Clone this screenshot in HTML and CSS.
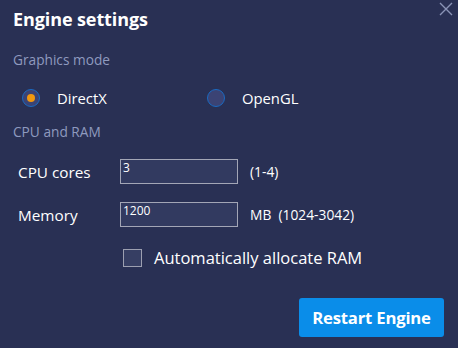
FILE: index.html
```html
<!DOCTYPE html>
<html>
<head>
<meta charset="utf-8">
<link rel="stylesheet" href="styles.css">
</head>
<body>
<div class="dialog">
  <h1 class="title">Engine settings</h1>
  <button class="close" aria-label="Close">
    <svg width="14" height="14" viewBox="0 0 14 14"><path d="M1 1L13 13M13 1L1 13" stroke="#8a93b7" stroke-width="1.4" fill="none"/></svg>
  </button>
  <div class="section-label">Graphics mode</div>
  <div class="radios">
    <label class="radio"><span class="dot checked"></span><span>DirectX</span></label>
    <label class="radio"><span class="dot"></span><span>OpenGL</span></label>
  </div>
  <div class="section-label second">CPU and RAM</div>
  <div class="field">
    <span class="field-label">CPU cores</span>
    <div class="input">3</div>
    <span class="hint">(1-4)</span>
  </div>
  <div class="field">
    <span class="field-label">Memory</span>
    <div class="input">1200</div>
    <span class="hint">MB&nbsp; (1024-3042)</span>
  </div>
  <label class="check"><span class="box"></span><span>Automatically allocate RAM</span></label>
  <div class="actions">
    <button class="primary">Restart Engine</button>
  </div>
</div>
</body>
</html>
```
FILE: styles.css
```css
html, body {
  margin: 0;
  padding: 0;
  background: #293054;
}
.dialog {
  position: relative;
  width: 458px;
  height: 348px;
  box-sizing: border-box;
  padding: 7px 14px 0 13px;
  font-family: "Open Sans", "Noto Sans", sans-serif;
  color: #ffffff;
  display: flex;
  flex-direction: column;
}
.title {
  margin: 0;
  font-size: 18px;
  font-weight: 700;
  line-height: 24px;
  letter-spacing: -0.1px;
}
.close {
  position: absolute;
  top: 2px;
  right: 4px;
  background: none;
  border: 0;
  padding: 0;
  width: 16px;
  height: 16px;
}
.section-label {
  margin-top: 20px;
  font-size: 13.7px;
  line-height: 18px;
  color: #8f9abf;
}
.section-label.second {
  margin-top: 15px;
}
.radios {
  display: grid;
  grid-template-columns: 185px 1fr;
  margin-top: 19px;
  padding-left: 9px;
}
.radio {
  display: flex;
  align-items: center;
  gap: 17px;
  font-size: 14.8px;
  line-height: 20px;
}
.dot {
  width: 16px;
  height: 16px;
  border-radius: 50%;
  border: 1.5px solid #1a6ac2;
  background: #3b4374;
  display: flex;
  align-items: center;
  justify-content: center;
}
.dot.checked::after {
  content: "";
  width: 8px;
  height: 8px;
  border-radius: 50%;
  background: #f0980f;
}
.field {
  display: flex;
  align-items: center;
  margin-top: 18px;
  padding-left: 5px;
}
.field + .field {
  margin-top: 18px;
}
.field-label {
  width: 102px;
  font-size: 15.3px;
  line-height: 20px;
}
.input {
  border: 1px solid #a3a6b6;
  background: #323a60;
  font-size: 12px;
  line-height: 14px;
  padding: 1px 2px;
  box-sizing: border-box;
  height: 25px;
  width: 118px;
  align-self: flex-start;
}
.hint {
  margin-left: 12px;
  font-size: 13.8px;
}
.check {
  display: flex;
  align-items: center;
  gap: 12px;
  margin-top: 20px;
  margin-left: 110px;
  font-size: 16.5px;
  line-height: 22px;
}
.box {
  width: 17px;
  height: 16px;
  border: 1.5px solid #9c9fb0;
  background: #363e63;
}
.actions {
  display: flex;
  justify-content: flex-end;
  margin-top: 29px;
}
.primary {
  width: 145px;
  height: 39px;
  border: 0;
  border-radius: 3px;
  background: #0a8de9;
  color: #ffffff;
  font-family: inherit;
  font-size: 16.7px;
  font-weight: 700;
  letter-spacing: -0.2px;
}
```
